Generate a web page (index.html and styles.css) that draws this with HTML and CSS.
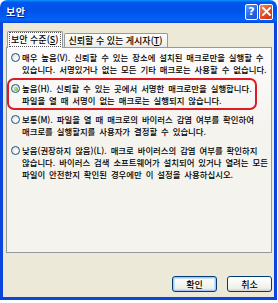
FILE: index.html
```html
<!DOCTYPE html>
<html lang="ko">
<head>
<meta charset="utf-8">
<link rel="stylesheet" href="styles.css">
</head>
<body>
<div class="window">
  <div class="titlebar">
    <span class="title">보안</span>
    <div class="caption-buttons">
      <span class="cbtn help">?</span>
      <span class="cbtn close">
        <svg width="9" height="9" viewBox="0 0 9 9"><path d="M1 1L8 8M8 1L1 8" stroke="#fff" stroke-width="1.8" stroke-linecap="square"/></svg>
      </span>
    </div>
  </div>
  <div class="client">
    <div class="tabs">
      <div class="tab active"><span class="focus">보안 수준(<u>S</u>)</span></div>
      <div class="tab">신뢰할 수 있는 게시자(<u>T</u>)</div>
    </div>
    <div class="panel">
      <div class="item">
        <span class="radio"></span>
        <p>매우 높음(V). 신뢰할 수 있는 장소에 설치된 매크로만을 실행할 수<br>있습니다. 서명있거나 없는 모든 기타 매크로는 사용할 수 없습니다.</p>
      </div>
      <div class="item highlight">
        <span class="radio checked"></span>
        <p>높음(H). 신뢰할 수 있는 곳에서 서명한 매크로만을 실행합니다.<br>파일을 열 때 서명이 없는 매크로는 실행되지 않습니다.</p>
      </div>
      <div class="item">
        <span class="radio"></span>
        <p>보통(M). 파일을 열 때 매크로의 바이러스 감염 여부를 확인하여<br>매크로를 실행할지를 사용자가 결정할 수 있습니다.</p>
      </div>
      <div class="item">
        <span class="radio"></span>
        <p>낮음(권장하지 않음)(L). 매크로 바이러스의 감염 여부를 확인하지<br>않습니다. 바이러스 검색 소프트웨어가 설치되어 있거나 열려는 모든<br>파일이 안전한지 확인된 경우에만 이 설정을 사용하십시오.</p>
      </div>
    </div>
    <div class="buttons">
      <button class="btn default">확인</button>
      <button class="btn">취소</button>
    </div>
  </div>
</div>
</body>
</html>
```

FILE: styles.css
```css
html, body {
  margin: 0;
  padding: 0;
  background: #ffffff;
}
body {
  font-family: "Noto Sans CJK KR", "Noto Sans", sans-serif;
  color: #000;
}
.window {
  width: 277px;
  height: 300px;
  display: flex;
  flex-direction: column;
  border-radius: 7px 7px 0 0;
  overflow: hidden;
}
.titlebar {
  height: 23px;
  flex: none;
  display: flex;
  align-items: center;
  justify-content: space-between;
  padding: 0 4px 0 6px;
  background: linear-gradient(to bottom, #0a97ff 0%, #0058ee 10%, #0051e8 45%, #0462f6 85%, #0359f0 93%, #0241d4 100%);
}
.title {
  color: #fff;
  font-weight: bold;
  font-size: 10px;
  letter-spacing: 0.5px;
  text-shadow: 1px 1px 0 #0a1e8a;
}
.caption-buttons {
  display: flex;
  gap: 1px;
  align-items: center;
}
.cbtn {
  width: 11px;
  height: 14px;
  border: 1px solid #fff;
  border-radius: 2px;
  display: flex;
  align-items: center;
  justify-content: center;
  color: #fff;
  font-family: "DejaVu Sans", sans-serif;
  font-weight: bold;
  font-size: 11px;
}
.help {
  background: linear-gradient(135deg, #5b9bff 0%, #2663e6 60%, #1e4fd0 100%);
}
.close {
  width: 12px;
  background: linear-gradient(135deg, #f08a62 0%, #e0451d 60%, #c8361a 100%);
}
.client {
  flex: 1;
  background: #ece9d8;
  border: 3px solid #0a45dd;
  border-top: none;
  padding: 8px 2px 0 3px;
  display: flex;
  flex-direction: column;
}
.tabs {
  display: flex;
  align-items: flex-end;
  height: 16px;
  padding-left: 1px;
  font-size: 9px;
  font-weight: 500;
}
.tab {
  box-sizing: border-box;
  height: 14px;
  line-height: 13px;
  padding: 0 4px;
  border: 1px solid #919b9c;
  border-bottom: none;
  border-radius: 2px 2px 0 0;
  background: linear-gradient(#ffffff, #ecebe5);
}
.tab.active {
  height: 17px;
  line-height: 15px;
  padding: 0 2px;
  background: #fcfcfe;
  position: relative;
  z-index: 1;
  margin-bottom: -1px;
}
.tab.active + .tab {
  margin-left: 1px;
}
.focus {
  outline: 1px dotted #555;
  padding: 0 1px;
}
.panel {
  box-sizing: border-box;
  height: 206px;
  border: 1px solid #919b9c;
  background: linear-gradient(#fcfcfe, #f4f3ee 40%, #f4f3ee);
  padding: 3px 4px 0 4px;
  font-size: 8.4px;
  font-weight: 500;
  line-height: 12px;
  word-spacing: 1.6px;
}
.item {
  display: flex;
  align-items: flex-start;
  margin-bottom: 7px;
}
.item p {
  margin: 0;
  white-space: nowrap;
}
.radio {
  flex: none;
  width: 9px;
  height: 9px;
  box-sizing: border-box;
  border: 1px solid #1c5180;
  border-radius: 50%;
  background: radial-gradient(circle at 65% 65%, #ffffff 0%, #e4e2da 80%);
  margin: 2px 2px 0 0;
  display: flex;
  align-items: center;
  justify-content: center;
}
.radio.checked::after {
  content: "";
  width: 4px;
  height: 4px;
  border-radius: 50%;
  background: radial-gradient(circle at 40% 40%, #b6f08c, #2ea12b);
}
.highlight {
  border: 2px solid #dc1c24;
  border-radius: 7px;
  margin: -4px 10px 3px -4px;
  padding: 2px 0 2px 2px;
}
.buttons {
  display: flex;
  justify-content: flex-end;
  gap: 10px;
  margin-top: 23px;
}
.btn {
  box-sizing: border-box;
  width: 45px;
  height: 16px;
  padding: 0;
  font-family: "Noto Sans CJK KR", sans-serif;
  font-size: 9px;
  font-weight: 500;
  line-height: 13px;
  border: 1px solid #003c74;
  border-radius: 3px;
  background: linear-gradient(#ffffff, #f0f0ea 80%, #d6d0c5);
  color: #000;
}
.btn.default {
  box-shadow: inset 0 0 0 1px #a8c6f4, inset 0 0 0 2px #cde0fb;
}
```
